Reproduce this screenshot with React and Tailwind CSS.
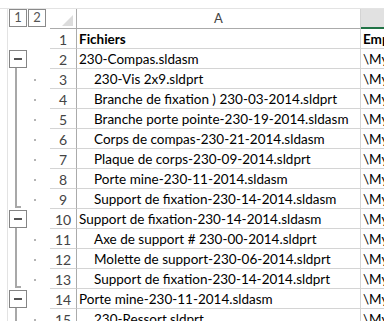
import React from "react";

const rows = [
    { n: 1, a: "Fichiers", b: "Emplacement", bold: true },
    { n: 2, a: "230-Compas.sldasm", b: "\\My Documents\\230", kind: "parent" },
    { n: 3, a: "230-Vis 2x9.sldprt", b: "\\My Documents\\230", kind: "child" },
    { n: 4, a: "Branche de fixation ) 230-03-2014.sldprt", b: "\\My Documents\\230", kind: "child" },
    { n: 5, a: "Branche porte pointe-230-19-2014.sldasm", b: "\\My Documents\\230", kind: "child" },
    { n: 6, a: "Corps de compas-230-21-2014.sldasm", b: "\\My Documents\\230", kind: "child" },
    { n: 7, a: "Plaque de corps-230-09-2014.sldprt", b: "\\My Documents\\230", kind: "child" },
    { n: 8, a: "Porte mine-230-11-2014.sldasm", b: "\\My Documents\\230", kind: "child" },
    { n: 9, a: "Support de fixation-230-14-2014.sldasm", b: "\\My Documents\\230", kind: "last" },
    { n: 10, a: "Support de fixation-230-14-2014.sldasm", b: "\\My Documents\\230", kind: "parent" },
    { n: 11, a: "Axe de support # 230-00-2014.sldprt", b: "\\My Documents\\230", kind: "child" },
    { n: 12, a: "Molette de support-230-06-2014.sldprt", b: "\\My Documents\\230", kind: "child" },
    { n: 13, a: "Support de fixation-230-14-2014.sldprt", b: "\\My Documents\\230", kind: "last" },
    { n: 14, a: "Porte mine-230-11-2014.sldasm", b: "\\My Documents\\230", kind: "parent" },
    { n: 15, a: "230-Ressort.sldprt", b: "\\My Documents\\230", kind: "child" },
];

// outline gutter for one row: minus box, tree line, dot
const Outline = ({ kind }) => {
    if (kind === "parent") {
        return (
            <div className="relative w-[50px] h-full">
                <div className="absolute left-[9px] top-[1px] w-[18px] h-[18px] border border-[#858585] bg-white flex items-center justify-center">
                    <div className="w-[8px] h-[2px] bg-[#555]" />
                </div>
                <div className="absolute left-[15px] top-[19px] w-[2px] h-[1px] bg-[#a8a8a8]" />
            </div>
        );
    }
    if (kind === "child" || kind === "last") {
        return (
            <div className="relative w-[50px] h-full">
                {kind === "child" ? (
                    <div className="absolute left-[15px] top-0 w-[2px] h-full bg-[#a8a8a8]" />
                ) : (
                    <>
                        <div className="absolute left-[15px] top-0 w-[2px] h-[19px] bg-[#a8a8a8]" />
                        <div className="absolute left-[15px] top-[17px] w-[6px] h-[2px] bg-[#a8a8a8]" />
                    </>
                )}
                <div className="absolute left-[34px] top-[10px] w-[2px] h-[2px] bg-[#b4b4b4]" />
            </div>
        );
    }
    return <div className="w-[50px] h-full" />;
};

const App = () => {
    return (
        <div
            className="relative w-[384px] h-[321px] overflow-hidden bg-white text-black"
            style={{ fontFamily: "Lato, 'Liberation Sans', sans-serif" }}
        >
            <div className="absolute left-[7px] top-[8px] bottom-0 w-[1px] bg-[#e3e3e3]" />
            <div className="pt-[8px]">
                {/* header row */}
                <div className="flex h-[21px] border-t border-[#e3e3e3]">
                    <div className="w-[50px] flex gap-[1px] pl-[9px]">
                        <div className="w-[18px] h-[18px] border border-[#8a8a8a] flex items-center justify-center text-[13px] text-[#555]">1</div>
                        <div className="w-[18px] h-[18px] border border-[#8a8a8a] flex items-center justify-center text-[13px] text-[#555]">2</div>
                    </div>
                    <div className="relative w-[27px] border-b border-r border-[#ababab]">
                        <svg className="absolute right-[3px] bottom-[2px]" width="11" height="11" viewBox="0 0 11 11">
                            <polygon points="11,0 11,11 0,11" fill="#dcdcdc" />
                        </svg>
                    </div>
                    <div className="w-[284px] border-b border-r border-[#ababab] border-r-[#d4d4d4] flex items-center justify-center text-[13px] text-[#444]">
                        A
                    </div>
                    <div className="flex-1 bg-[#e1e1e1] border-b-2 border-[#217346]" />
                </div>

                {rows.map((r) => (
                    <div key={r.n} className="flex h-[20px]">
                        <Outline kind={r.kind} />
                        <div className="w-[27px] border-b border-r border-[#d4d4d4] border-r-[#ababab] flex items-center justify-center text-[14px] text-[#444] leading-none pt-[2px]">
                            {r.n}
                        </div>
                        <div
                            className={`w-[284px] border-b border-r border-[#d4d4d4] flex items-center whitespace-nowrap overflow-hidden text-[13.5px] leading-none pt-[2px] ${
                                r.kind === "child" || r.kind === "last" ? "pl-[17px]" : "pl-[2px]"
                            } ${r.bold ? "font-bold" : ""}`}
                        >
                            {r.a}
                        </div>
                        <div
                            className={`flex-1 border-b border-[#d4d4d4] flex items-center whitespace-nowrap overflow-hidden text-[13.5px] leading-none pt-[2px] pl-[2px] ${
                                r.bold ? "font-bold" : ""
                            }`}
                        >
                            {r.b}
                        </div>
                    </div>
                ))}
            </div>
        </div>
    );
};

export default App;
